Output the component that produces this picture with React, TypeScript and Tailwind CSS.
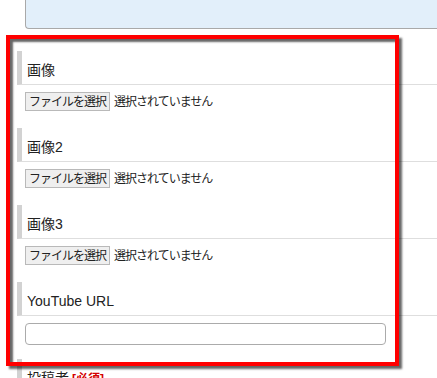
const jp = "font-['Liberation_Sans','Noto_Sans_CJK_JP',sans-serif]";

function Heading({ children }: { children: React.ReactNode }) {
  return (
    <div className="h-[34px] border-l-[5px] border-b border-l-[#d2d2d2] border-b-[#dedede] pl-[5px] pt-[9px] text-[14px] leading-[20px] text-[#222]">
      {children}
    </div>
  );
}

function FileField() {
  return (
    <div className="h-[43px] pl-[8px] pt-[7px] flex items-start">
      <div className="h-[19px] flex items-center border border-[#b9b9b9] bg-[#efefef] px-[3px] text-[12px] tracking-[-1px] text-[#222]">
        ファイルを選択
      </div>
      <span className="ml-[4px] h-[19px] flex items-center text-[12px] tracking-[-1px] text-[#222]">
        選択されていません
      </span>
    </div>
  );
}

export default function App() {
  return (
    <div className={`relative w-[437px] h-[378px] overflow-hidden bg-white ${jp}`}>
      {/* top info box */}
      <div className="ml-[25px] w-[520px] h-[29px] bg-[#e2effa] border-l border-b border-[#a9a9a9] rounded-bl-[4px]" />

      <div className="mt-[22px] ml-[17px] w-[520px]">
        <Heading>画像</Heading>
        <FileField />

        <Heading>画像2</Heading>
        <FileField />

        <Heading>画像3</Heading>
        <FileField />

        <Heading>YouTube URL</Heading>
        <div className="h-[43px] pl-[8px] pt-[7px]">
          <div className="w-[361px] h-[22px] rounded-[4px] border border-[#ababab] bg-white" />
        </div>

        <Heading>
          投稿者
          <span className="ml-[3px] text-[12px] font-bold text-[#d40000]">[必須]</span>
        </Heading>
      </div>

      {/* annotation frame */}
      <div className="absolute left-[6px] top-[35px] w-[393px] h-[331px] border-[4px] border-[#ff0000] shadow-[3px_3px_2px_rgba(0,0,0,0.6),inset_3px_3px_2px_rgba(0,0,0,0.6)] pointer-events-none" />
    </div>
  );
}
